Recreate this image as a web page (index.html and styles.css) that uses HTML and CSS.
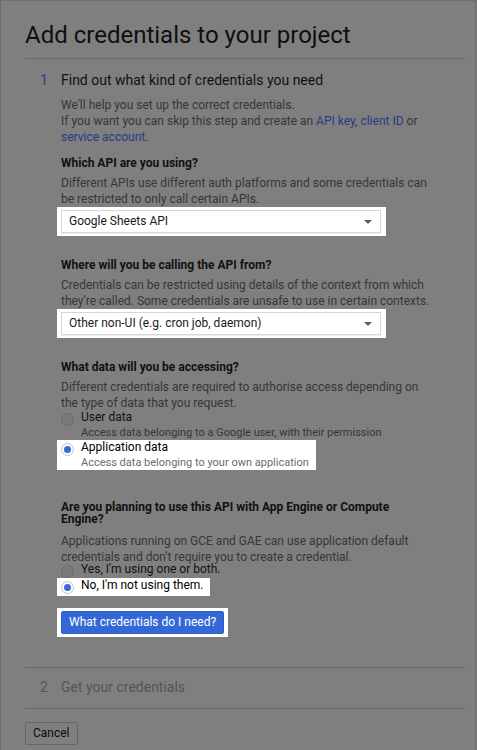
FILE: index.html
```html
<!DOCTYPE html>
<html lang="en">
<head>
<meta charset="utf-8">
<title>Add credentials to your project</title>
<link rel="stylesheet" href="styles.css">
</head>
<body>
<div class="dialog">
  <h1 class="title">Add credentials to your project</h1>

  <section class="step step-active">
    <div class="step-head"><span class="step-num">1</span><span class="step-title">Find out what kind of credentials you need</span></div>
    <div class="step-body">
      <p class="intro">We'll help you set up the correct credentials.<br>If you want you can skip this step and create an <a class="link">API key</a>, <a class="link">client ID</a> or <a class="link">service account</a>.</p>

      <div class="field">
        <div class="label">Which API are you using?</div>
        <p class="desc">Different APIs use different auth platforms and some credentials can be restricted to only call certain APIs.</p>
        <div class="hl hl-select">
          <div class="select"><span class="select-text">Google Sheets API</span><span class="caret"></span></div>
        </div>
      </div>

      <div class="field">
        <div class="label">Where will you be calling the API from?</div>
        <p class="desc">Credentials can be restricted using details of the context from which they're called. Some credentials are unsafe to use in certain contexts.</p>
        <div class="hl hl-select">
          <div class="select"><span class="select-text">Other non-UI (e.g. cron job, daemon)</span><span class="caret"></span></div>
        </div>
      </div>

      <div class="field">
        <div class="label">What data will you be accessing?</div>
        <p class="desc">Different credentials are required to authorise access depending on the type of data that you request.</p>
        <div class="radios">
          <div class="option">
            <span class="radio"></span>
            <div class="option-text">
              <div class="option-label">User data</div>
              <div class="option-sub">Access data belonging to a Google user, with their permission</div>
            </div>
          </div>
          <div class="hl hl-option">
            <div class="option">
              <span class="radio radio-on"></span>
              <div class="option-text">
                <div class="option-label">Application data</div>
                <div class="option-sub">Access data belonging to your own application</div>
              </div>
            </div>
          </div>
        </div>
      </div>

      <div class="field field-engine">
        <div class="label label-tight">Are you planning to use this API with App Engine or Compute Engine?</div>
        <p class="desc">Applications running on GCE and GAE can use application default credentials and don't require you to create a credential.</p>
        <div class="radios">
          <div class="option">
            <span class="radio"></span>
            <div class="option-text"><div class="option-label">Yes, I'm using one or both.</div></div>
          </div>
          <div class="hl hl-short">
            <div class="option">
              <span class="radio radio-on"></span>
              <div class="option-text"><div class="option-label">No, I'm not using them.</div></div>
            </div>
          </div>
        </div>
      </div>

      <div class="hl hl-button">
        <button class="primary">What credentials do I need?</button>
      </div>
    </div>
  </section>

  <section class="step step-disabled">
    <div class="step-head"><span class="step-num">2</span><span class="step-title">Get your credentials</span></div>
  </section>

  <div class="actions">
    <button class="cancel">Cancel</button>
  </div>
</div>
</body>
</html>
```

FILE: styles.css
```css
* { box-sizing: border-box; }

html, body {
  margin: 0;
  padding: 0;
  background: #7f7f7f;
}

body {
  font-family: Roboto, "Liberation Sans", Arial, sans-serif;
  font-size: 12px;
  line-height: 16px;
  color: #363636;
}

.dialog {
  width: 476px;
  min-height: 750px;
  border: 1px solid #6e6e6e;
  border-bottom: none;
  padding: 18px 10px 0 24px;
}

.title {
  margin: 0 0 7px;
  font-size: 24px;
  line-height: 32px;
  font-weight: 400;
  color: #0f0f0f;
}

.step {
  border-top: 1px solid #6a6a6a;
}

.step-active {
  padding: 11px 0 30px;
}

.step-disabled {
  padding: 9px 0 11px;
  border-bottom: 1px solid #6a6a6a;
}

.step-head {
  display: flex;
  font-size: 14px;
  line-height: 20px;
}

.step-num {
  width: 36px;
  padding-left: 15px;
  color: #25407f;
}

.step-title {
  color: #111;
}

.step-disabled .step-num,
.step-disabled .step-title {
  color: #555;
}

.step-body {
  margin-left: 36px;
  width: 370px;
}

.intro {
  margin: 7px 0 0;
}

.link {
  color: #233d82;
  text-decoration: none;
}

.field {
  margin-top: 10px;
}

.field + .field {
  margin-top: 21px;
}

.field.field-engine {
  margin-top: 31px;
}

.label {
  font-weight: 700;
  color: #111;
}

.label-tight {
  line-height: 12px;
  margin-bottom: 8px;
}

.desc {
  margin: 4px 0 0;
}

.label-tight + .desc {
  margin-top: 0;
}

.hl {
  background: #fff;
  margin-left: -4px;
  width: fit-content;
}

.hl-select {
  padding: 3px 5px 3px 4px;
}

.select {
  width: 320px;
  height: 23px;
  border: 1px solid #d6d6d6;
  box-shadow: 0 1px 0 #eeeeee;
  display: flex;
  align-items: center;
  justify-content: space-between;
  padding: 0 8px 0 7px;
  line-height: 21px;
  color: #1a1a1a;
}

.caret {
  width: 0;
  height: 0;
  border-left: 4px solid transparent;
  border-right: 4px solid transparent;
  border-top: 4px solid #5f5f5f;
}

.radios {
  margin-top: -1px;
  display: flex;
  flex-direction: column;
  gap: 0;
}

.option {
  display: flex;
  gap: 7px;
}

.radio {
  flex: none;
  width: 13px;
  height: 13px;
  margin-top: 3px;
  border-radius: 50%;
  border: 1px solid #6a6a6a;
  background: #7a7a7a;
}

.hl .radio {
  border-color: #c4c4c4;
  background: #fff;
}

.radio-on {
  position: relative;
}

.radio-on::after {
  content: "";
  position: absolute;
  left: 2px;
  top: 2px;
  width: 7px;
  height: 7px;
  border-radius: 50%;
  background: #3a6ad8;
}

.option-label {
  line-height: 15px;
  color: #111;
}

.hl .option-label {
  color: #000;
}

.option-sub {
  font-size: 11px;
  line-height: 15px;
  color: #363636;
}

.hl .option-sub {
  color: #6b6b6b;
}

.hl-option {
  padding: 0 7px 0 4px;
}

.field-engine .radios {
  margin-top: -3px;
  gap: 0;
}

.hl-short {
  padding: 0 6px 2px 4px;
}

.hl-button {
  margin-top: 12px;
  padding: 3px 4px 3px 4px;
}

.primary {
  display: block;
  height: 23px;
  padding: 0 7px;
  border: 1px solid #2c5cc8;
  border-radius: 2px;
  background: #3568d7;
  color: #fff;
  font-family: Roboto, "Liberation Sans", Arial, sans-serif;
  font-size: 12px;
  line-height: 21px;
}

.actions {
  padding-top: 13px;
}

.cancel {
  display: block;
  height: 23px;
  padding: 0 7px;
  border: 1px solid #666;
  border-radius: 2px;
  background: #7f7f7f;
  color: #0a0a0a;
  font-family: Roboto, "Liberation Sans", Arial, sans-serif;
  font-size: 12px;
  line-height: 21px;
}
```
